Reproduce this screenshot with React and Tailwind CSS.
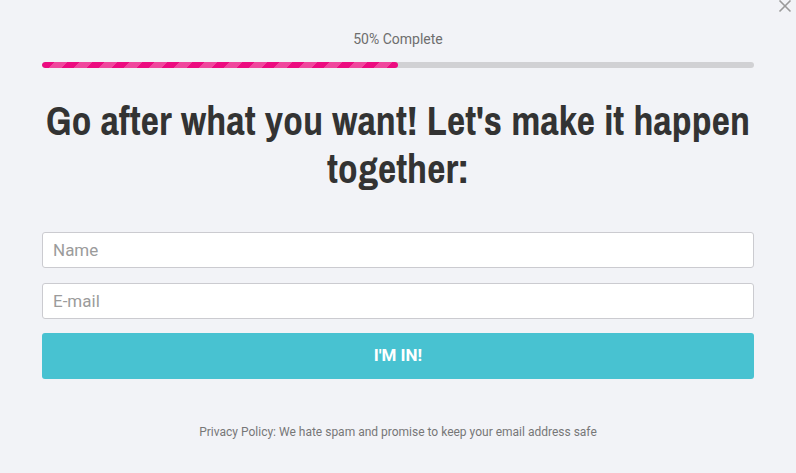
export default function App() {
  return (
    <div className="relative w-[796px] h-[473px] bg-[#f2f3f7] overflow-hidden" style={{ fontFamily: "Roboto, 'Liberation Sans', sans-serif" }}>
      <button className="absolute right-[4px] top-[-1px] text-[#9a9a9a]">
        <svg width="14" height="14" viewBox="0 0 14 14">
          <path d="M1.5 1.5 L12.5 12.5 M12.5 1.5 L1.5 12.5" stroke="#9a9a9a" strokeWidth="1.6" />
        </svg>
      </button>
      <div className="flex flex-col px-[42px] pt-[31px]">
        <div className="text-center text-[14px] leading-[16px] text-[#6e6e6e]">50% Complete</div>
        <div className="mt-[15px] h-[6px] w-full rounded-full bg-[#d1d1d4] overflow-hidden">
          <div className="h-full w-1/2 rounded-full bg-[repeating-linear-gradient(135deg,#ec0c80_0px,#ec0c80_8.8px,#f0479d_8.8px,#f0479d_17.7px)]" />
        </div>
        <h1 className="mt-[29px] text-center text-[40px] leading-[48px] font-bold text-[#333333]" style={{ fontFamily: "'Liberation Sans Narrow', 'Archivo Narrow', 'DejaVu Sans Condensed', 'Liberation Sans', sans-serif" }}>
          Go after what you want! Let's make it happen together:
        </h1>
        <div className="mt-[39px] flex flex-col">
          <input placeholder="Name" className="h-[36px] w-full rounded-[3px] border border-[#cbcbd0] bg-white px-[10px] text-[17px] text-[#333] placeholder:text-[#9b9b9b] outline-none" />
          <input placeholder="E-mail" className="mt-[15px] h-[36px] w-full rounded-[3px] border border-[#cbcbd0] bg-white px-[10px] text-[17px] text-[#333] placeholder:text-[#9b9b9b] outline-none" />
          <button className="mt-[14px] h-[46px] w-full rounded-[3px] bg-[#48c2d1] text-[17px] font-bold text-white">I'M IN!</button>
        </div>
        <div className="mt-[45px] text-center text-[12px] leading-[16px] text-[#777777]">Privacy Policy: We hate spam and promise to keep your email address safe</div>
      </div>
    </div>
  );
}
